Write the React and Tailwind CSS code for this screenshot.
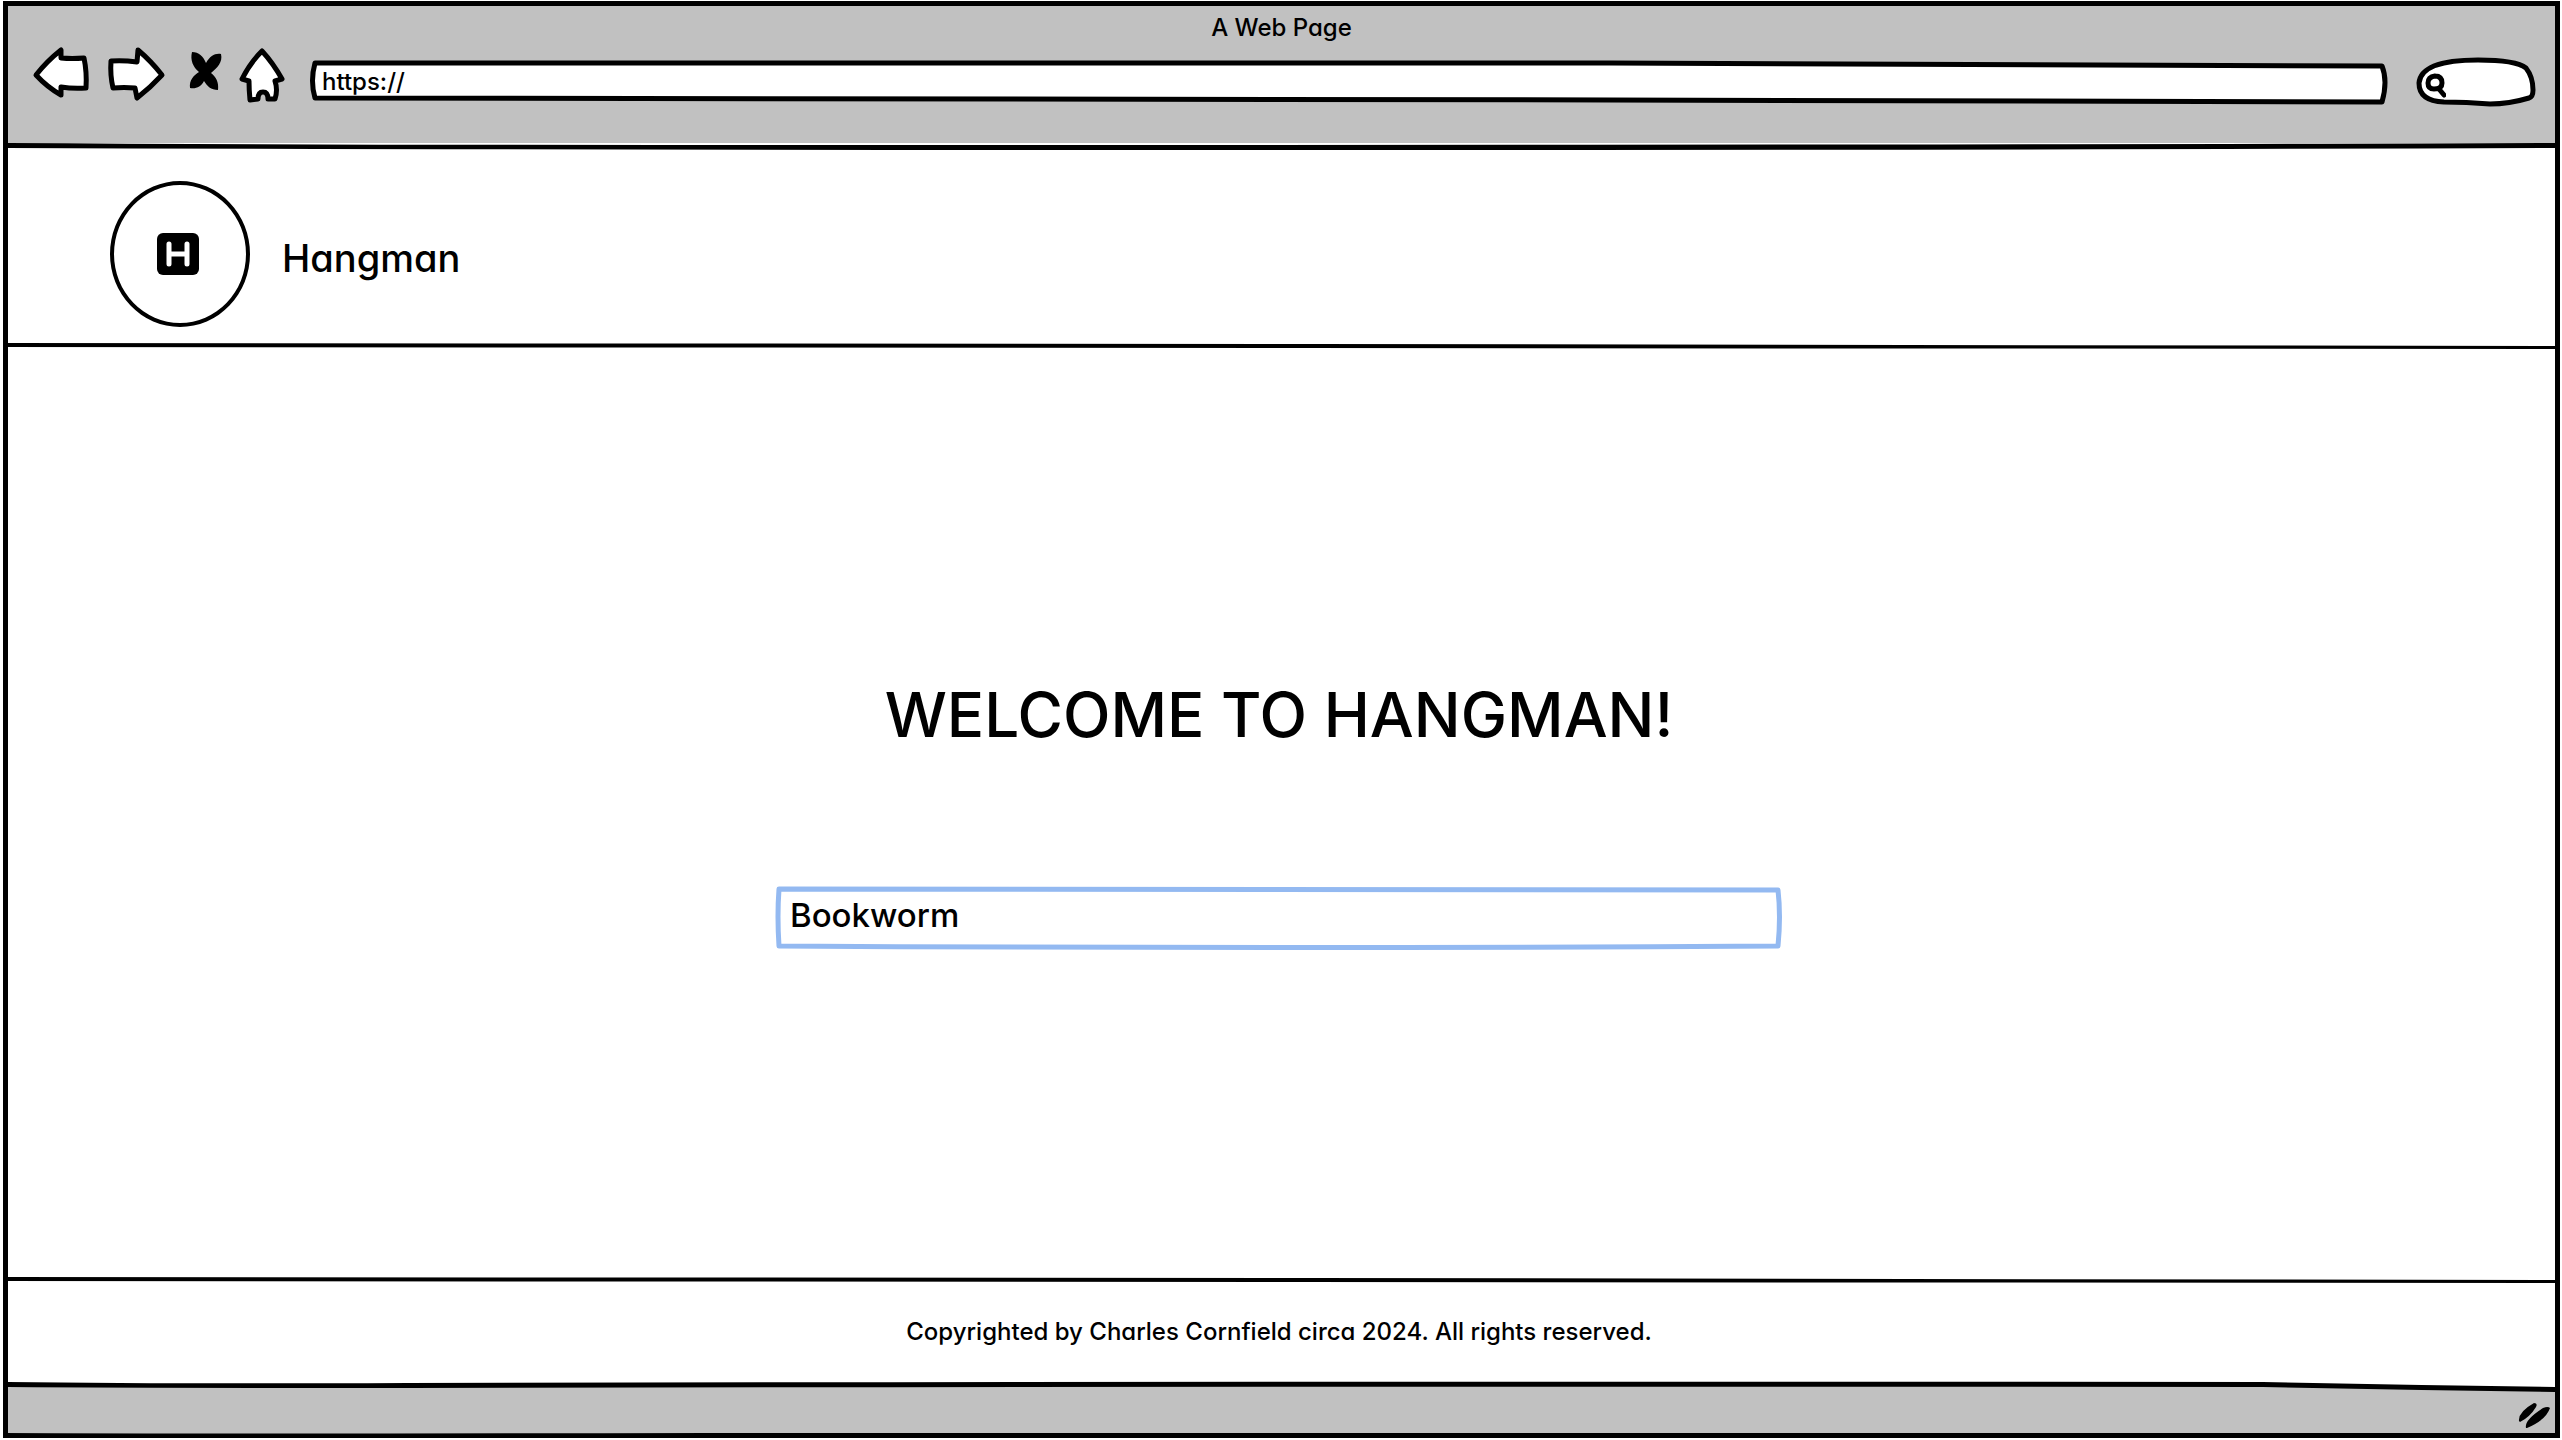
const inkLine = { fill: "none", stroke: "currentColor", strokeLinecap: "round", strokeLinejoin: "round" };

function Rule({ d, paper, className = "" }) {
  return (
    <svg aria-hidden="true" viewBox="0 0 2546 8" preserveAspectRatio="none" className={`block h-2 w-full shrink-0 overflow-visible ${className}`}>
      {paper && <path d={paper} fill="white" />}
      <path d={d} fill="currentColor" />
    </svg>
  );
}

function Outline({ viewBox, d, className = "" }) {
  return (
    <svg aria-hidden="true" viewBox={viewBox} preserveAspectRatio="none" className={`pointer-events-none absolute inset-0 h-full w-full overflow-visible ${className}`}>
      <path d={d} fill="white" stroke="currentColor" strokeWidth="5" strokeLinejoin="round" />
    </svg>
  );
}

function NavButton({ label, viewBox, className, children }) {
  return (
    <button type="button" aria-label={label} className={`block shrink-0 ${className}`}>
      <svg aria-hidden="true" viewBox={viewBox} className="block h-full w-full">{children}</svg>
    </button>
  );
}

function Toolbar() {
  return (
    <div className="bg-[#c1c1c1]">
      <p className="h-10 pt-1 text-center text-2xl leading-9">A Web Page</p>
      <div className="flex h-[97px] items-start pr-[19px] pl-6">
        <NavButton label="Back" viewBox="32 46 58 54" className="h-[54px] w-[58px]">
          <path d="M36 75 Q47 61 61 50 L61 58 Q72 59 84 58 Q87 72 86 88 Q73 89 61 87 L61 95 Q47 87 36 75 Z" {...inkLine} fill="white" strokeWidth="5" />
        </NavButton>
        <NavButton label="Forward" viewBox="106 46 60 56" className="ml-4 h-14 w-[60px]">
          <path d="M111 61 Q123 60 137 62 L138 50 Q151 61 162 75 Q150 88 137 98 L135 88 Q124 87 113 88 Q110 75 111 61 Z" {...inkLine} fill="white" strokeWidth="5" />
        </NavButton>
        <NavButton label="Stop" viewBox="188 46 36 46" className="ml-[22px] h-[46px] w-9">
          <path d="M192 52 C199 52 203 56 206 63 C210 56 215 53 221 54 C223 62 217 68 211 73 C216 77 219 82 218 90 C211 90 207 86 204 81 C201 87 196 89 190 88 C189 80 194 75 199 72 C193 67 190 60 192 52 Z" fill="currentColor" />
        </NavButton>
        <NavButton label="Home" viewBox="238 44 48 58" className="ml-3.5 h-[58px] w-12">
          <path d="M262 49 Q273 61 282 77 L275 79 Q278 88 275 97 L268 97 Q268 90 263 90 Q258 90 258 97 L250 98 Q249 88 249 79 L242 77 Q250 61 262 49 Z" {...inkLine} fill="white" strokeWidth="5" />
        </NavButton>
        <div className="relative mt-[15px] ml-6 h-11 min-w-0 flex-1">
          <Outline viewBox="0 0 2079 44" d="M5 2 Q600 1 1300 2 Q1700 4 2073 5 Q2079 20 2073 41 Q1700 41 1300 39 Q600 37 5 37 Q0 20 5 2 Z" />
          <input aria-label="Address" defaultValue="https://" className="relative block h-10 w-full bg-transparent px-3 text-2xl outline-none" />
        </div>
        <div className="relative mt-[11px] ml-7 h-[50px] w-[120px] shrink-0">
          <Outline viewBox="0 0 120 50" d="M28 45 Q3 44 3 26 Q5 3 62 3 Q100 3 110 11 Q117 20 117 33 Q117 40 113 41 Q93 47 74 47 Q50 45 28 45 Z" />
          <svg aria-hidden="true" viewBox="0 0 22 26" className="absolute top-4 left-2 h-[26px] w-[22px]">
            <path d="M11 3 Q18 3 18 10 Q18 16 10 16 Q4 16 4 10 Q4 4 11 3 M15 16 L20 22" {...inkLine} strokeWidth="5" />
          </svg>
          <input type="search" aria-label="Search" className="relative block h-full w-full bg-transparent pr-3 pl-9 text-2xl outline-none" />
        </div>
      </div>
    </div>
  );
}

function HangmanHeader() {
  return (
    <header className="flex items-center gap-8 pt-[30px] pb-4 pl-[102px]">
      <div className="flex h-[146px] w-[140px] items-center justify-center rounded-[50%] border-4 pr-1">
        <svg role="img" aria-label="Hangman logo" viewBox="0 0 42 42" className="h-[42px] w-[42px]">
          <rect width="42" height="42" rx="6" />
          <path d="M12 11 V31 M30 11 V31 M12 21 H30" fill="none" stroke="white" strokeWidth="5" strokeLinecap="round" />
        </svg>
      </div>
      <p className="pt-2 text-[38px] leading-10">Hangman</p>
    </header>
  );
}

function StatusBar() {
  return (
    <div className="bg-[#c1c1c1]">
      <Rule
        paper="M0 -1 H2546 V7 Q2400 4 2254 2 H0 Z"
        d="M0 0 Q150 2 400 1 Q1300 -1 2254 0 Q2400 3 2546 5 V10 Q2400 8 2254 5 Q1300 4 400 6 Q150 6 0 5 Z"
      />
      <div className="flex h-10 justify-end pt-3 pr-[5px]">
        <svg aria-hidden="true" viewBox="0 0 32 26" className="h-[26px] w-8">
          <path d="M1 19 Q0 10 16 1 Q20 1 18 5 Q12 15 2 20 Z M8 26 Q6 18 25 6 Q30 4 32 6 Q28 18 9 26 Z" fill="currentColor" />
        </svg>
      </div>
      <Rule d="M-5 3 Q200 4 700 3 H2551 V8 H-5 Z" />
    </div>
  );
}

export default function App() {
  return (
    <div className="min-h-screen bg-white pt-px pr-0.5 pb-0.5 pl-[3px] font-['Inter',sans-serif] font-medium text-black [font-feature-settings:'cv11']">
      <div className="flex min-h-[calc(100vh-3px)] flex-col border-x-[5px] border-t-[5px]">
        <Toolbar />
        <Rule d="M0 0 Q300 2 700 2 Q2000 2 2546 0 V5 Q2000 7 1300 7 Q600 7 0 5 Z" />
        <HangmanHeader />
        <Rule d="M-5 0 L1300 1 L2546 3 V6 L1300 5 L-5 4 Z" />
        <main className="flex flex-1 flex-col items-center pt-[324px] pr-[5px]">
          <h1 className="text-[62px] leading-[80px]">WELCOME TO HANGMAN!</h1>
          <div className="relative mt-[131px] h-16 w-[1006px] max-w-full">
            <Outline viewBox="0 0 1006 64" d="M3 3 Q500 2 1002 4 Q1005 30 1002 60 Q500 63 3 60 Q1 30 3 3 Z" className="text-[#93b9f1]" />
            <input aria-label="Word" defaultValue="Bookworm" className="relative block h-[58px] w-full bg-transparent px-3.5 text-[33px] outline-none" />
          </div>
        </main>
        <Rule d="M-5 1 L1300 2 L2546 4 V7 L1300 6 L-5 5 Z" />
        <footer className="pt-8 pr-[5px] pb-[34px] text-center text-2xl">Copyrighted by Charles Cornfield circa 2024. All rights reserved.</footer>
        <StatusBar />
      </div>
    </div>
  );
}
